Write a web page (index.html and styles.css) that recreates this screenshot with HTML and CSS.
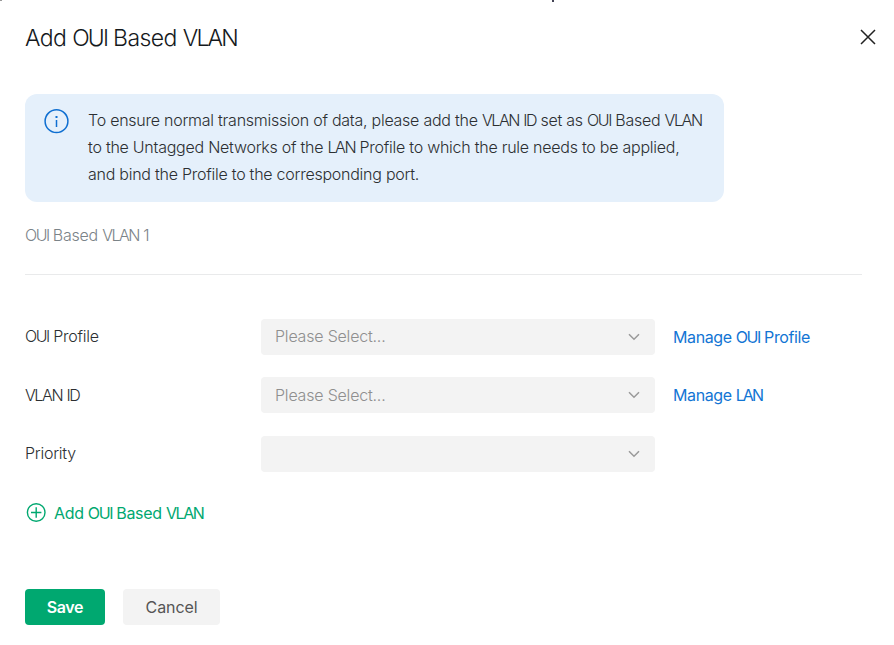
FILE: index.html
```
<!DOCTYPE html>
<html lang="en">
<head>
<meta charset="utf-8">
<title>Add OUI Based VLAN</title>
<link rel="stylesheet" href="styles.css">
</head>
<body>
<main class="dialog">
  <i class="edge edge-corner"></i><i class="edge edge-mark"></i>
  <header class="header">
    <h1 class="title">Add <span class="caps">OUI</span> Based <span class="caps">VLAN</span></h1>
    <svg class="close" width="16" height="16" viewBox="0 0 16 16"><path d="M1 1l14 14M15 1L1 15"/></svg>
  </header>
  <section class="notice">
    <svg class="info" width="26" height="26" viewBox="0 0 26 26"><circle cx="12.5" cy="13.2" r="11.4"/><path d="M12.5 12v7"/><rect x="11.5" y="8" width="2" height="2"/></svg>
    <p class="notice-text">To ensure normal transmission of data, please add the <span class="caps">VLAN</span> <span class="caps">ID</span> set as <span class="caps">OUI</span> Based <span class="caps">VLAN</span><br>to the Untagged Networks of the <span class="caps">LAN</span> Profile to which the rule needs to be applied,<br>and bind the Profile to the corresponding port.</p>
  </section>
  <h2 class="subtitle"><span class="caps">OUI</span> Based <span class="caps">VLAN</span> 1</h2>
  <form class="form">
    <div class="row row-profile">
      <label class="label raised"><span class="caps">OUI</span> Profile</label>
      <div class="select"><span class="placeholder raised">Please Select...</span><svg class="chevron" width="12" height="8" viewBox="0 0 12 8"><path d="M1 1.2l5 5 5-5"/></svg></div>
      <a class="link">Manage <span class="caps">OUI</span> Profile</a>
    </div>
    <div class="row row-vlan">
      <label class="label"><span class="caps">VLAN</span> <span class="caps">ID</span></label>
      <div class="select"><span class="placeholder">Please Select...</span><svg class="chevron" width="12" height="8" viewBox="0 0 12 8"><path d="M1 1.2l5 5 5-5"/></svg></div>
      <a class="link">Manage <span class="caps">LAN</span></a>
    </div>
    <div class="row row-priority">
      <label class="label raised">Priority</label>
      <div class="select"><svg class="chevron" width="12" height="8" viewBox="0 0 12 8"><path d="M1 1.2l5 5 5-5"/></svg></div>
    </div>
  </form>
  <div class="add"><svg class="plus" width="20" height="20" viewBox="0 0 20 20"><circle cx="10.2" cy="9.5" r="8.8"/><path d="M10.2 4.3v10.4M5 9.5h10.4"/></svg><span>Add <span class="caps">OUI</span> Based <span class="caps">VLAN</span></span></div>
  <footer class="actions">
    <button class="btn save">Save</button>
    <button class="btn cancel">Cancel</button>
  </footer>
</main>
</body>
</html>
```
FILE: styles.css
```
* { box-sizing: border-box; margin: 0; padding: 0; }
body { background: #fff; overflow: hidden; font: 300 16px/27px Inter, "Liberation Sans", sans-serif; letter-spacing: -0.25px; color: #2c2f32; }
svg { fill: none; flex: none; }
.caps { letter-spacing: -1.4px; }
.dialog { position: relative; width: 894px; height: 645px; padding: 0 18px 0 25px; }
.edge { position: absolute; top: 0; }
.edge-corner { left: 0; width: 2px; height: 1px; background: #999; }
.edge-mark { left: 552px; width: 2px; height: 2px; background: #445; }
.header { display: flex; align-items: center; justify-content: space-between; height: 74px; }
.title { padding-top: 3px; font-size: 23px; font-weight: 300; letter-spacing: -0.58px; color: #15191c; }
.title .caps { letter-spacing: -1.8px; }
.close { stroke: #222; stroke-width: 1.5; }
.notice { display: flex; gap: 18px; width: 699px; height: 108px; margin-top: 20px; padding: 13px 19px; border-radius: 12px; background: #e5f0fb; }
.info { stroke: #0f6fd1; stroke-width: 1.5; margin-top: 1px; }
.info rect { fill: #0f6fd1; stroke: none; }
.notice-text { white-space: nowrap; }
.subtitle { width: 837px; height: 73px; padding-top: 20px; border-bottom: 1px solid #e9eaeb; font-size: 16px; font-weight: 300; color: #7b8388; }
.subtitle .caps { letter-spacing: -1.5px; }
.form { margin-top: 44px; }
.row { display: flex; align-items: center; height: 36px; }
.row-vlan { margin: 22px 0 23px; }
.label { width: 236px; }
.raised { padding-bottom: 2px; }
.select { display: flex; align-items: center; width: 394px; height: 36px; padding: 0 15px 0 14px; border-radius: 4px; background: #f3f3f3; }
.placeholder { color: #8f8f8f; letter-spacing: -0.2px; }
.chevron { margin-left: auto; stroke: #999; stroke-width: 1.5; }
.link { margin-left: 18px; font-weight: 400; letter-spacing: -0.4px; color: #1275d4; }
.row-vlan .link .caps { letter-spacing: -1.9px; }
.add { display: flex; align-items: center; gap: 8px; margin: 28px 0 0 1px; color: #00a870; font-weight: 400; letter-spacing: -0.32px; }
.plus { margin-top: -2px; stroke: #00a870; stroke-width: 1.4; }
.actions { display: flex; gap: 18px; margin-top: 62px; }
.btn { height: 36px; border: 0; border-radius: 4px; font: inherit; }
.save { width: 80px; background: #00a870; color: #fff; font-weight: 600; letter-spacing: -0.4px; }
.cancel { width: 97px; background: #f3f3f3; color: #555; font-weight: 400; letter-spacing: -0.1px; }
```
